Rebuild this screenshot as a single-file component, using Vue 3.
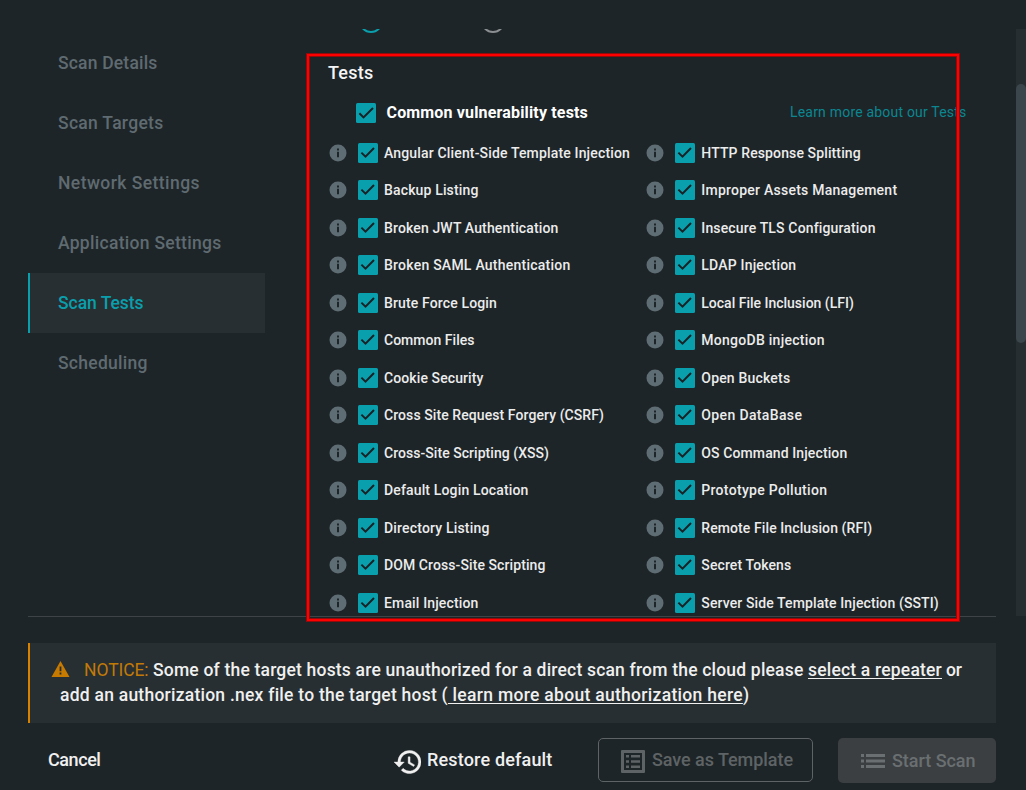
<script setup>
const nav = [
  ['Scan Details', 99.5], ['Scan Targets', 105.5], ['Network Settings', 142],
  ['Application Settings', 163.5], ['Scan Tests', 85.5], ['Scheduling', 89.8]
]
const columns = [
  [
    ['Angular Client-Side Template Injection', 246], ['Backup Listing', 94.5],
    ['Broken JWT Authentication', 174.5], ['Broken SAML Authentication', 186.5],
    ['Brute Force Login', 113], ['Common Files', 90.5], ['Cookie Security', 99.5],
    ['Cross Site Request Forgery (CSRF)', 220], ['Cross-Site Scripting (XSS)', 165],
    ['Default Login Location', 144.5], ['Directory Listing', 105.5],
    ['DOM Cross-Site Scripting', 161.5], ['Email Injection', 94.5]
  ],
  [
    ['HTTP Response Splitting', 159.5], ['Improper Assets Management', 196],
    ['Insecure TLS Configuration', 174], ['LDAP Injection', 95],
    ['Local File Inclusion (LFI)', 152.5], ['MongoDB injection', 123.5],
    ['Open Buckets', 89], ['Open DataBase', 101], ['OS Command Injection', 146],
    ['Prototype Pollution', 126], ['Remote File Inclusion (RFI)', 171],
    ['Secret Tokens', 90], ['Server Side Template Injection (SSTI)', 237.5]
  ]
]
// Tracks a label out or in so that it fills the given width.
const vFit = {
  mounted(el, { value }) {
    const natural = el.getBoundingClientRect().width
    el.style.letterSpacing = (value - natural) / (el.textContent.length) + 'px'
  }
}
</script>

<template>
  <div class="page">
    <div class="body">
      <nav class="side">
        <div v-for="n in nav" :key="n[0]" class="nav" :class="{ active: n[0] === 'Scan Tests' }">
          <span v-fit="n[1]">{{ n[0] }}</span>
        </div>
      </nav>
      <main class="main">
        <div class="radios"><i class="radio on"></i><i class="radio"></i></div>
        <h2><span v-fit="45.5">Tests</span></h2>
        <div class="group">
          <svg class="check" viewBox="0 0 20 20"><rect width="20" height="20" rx="1.5" /><path d="M3.4 10.3l4.1 4.1L17 5" /></svg>
          <b v-fit="201.5">Common vulnerability tests</b>
          <a><span v-fit="176.5">Learn more about our Tests</span></a>
        </div>
        <div class="columns">
          <div v-for="(c, i) in columns" :key="i" class="column">
            <div v-for="t in c" :key="t[0]" class="test">
              <svg class="info" viewBox="0 0 18 18"><circle cx="9" cy="9" r="8.5" /><path d="M8 4.6h2v1.8H8zM8 7.8h2v5.4H8z" /></svg>
              <svg class="check" viewBox="0 0 20 20"><rect width="20" height="20" rx="1.5" /><path d="M3.4 9.6l4.1 4.1L16 5" /></svg>
              <span v-fit="t[1]">{{ t[0] }}</span>
            </div>
          </div>
        </div>
      </main>
      <div class="track"><div class="thumb"></div></div>
    </div>
    <div class="rule"></div>
    <div class="notice">
      <div class="line first">
        <svg class="warn" viewBox="0 0 18 16"><path d="M9 0l9 16H0z" /><path class="mark" d="M8.1 5.6h1.8v4.6H8.1zM8.1 11.6h1.8v1.8H8.1z" /></svg>
        <em v-fit="64.5">NOTICE:</em>
        <span v-fit="650.5" class="s1">Some of the target hosts are unauthorized for a direct scan from the cloud please</span>
        <u v-fit="134">select a repeater</u>
        <span v-fit="16" class="or">or</span>
      </div>
      <div class="line second">
        <span v-fit="387.5">add an authorization .nex file to the target host (</span><u v-fit="295">&nbsp;learn more about authorization here</u><span v-fit="5">)</span>
      </div>
    </div>
    <div class="actions">
      <span v-fit="52.5" class="cancel">Cancel</span>
      <div class="restore">
        <svg class="history" viewBox="1 3 21 18"><path d="M13 3a9 9 0 0 0-9 9H1l4 4 4-4H6a7 7 0 1 1 2.06 4.94l-1.42 1.42A9 9 0 1 0 13 3zm-1 5v5l4.25 2.52.77-1.28-3.52-2.09V8z" /></svg>
        <span v-fit="125.5">Restore default</span>
      </div>
      <button class="save">
        <svg class="tpl" viewBox="0 0 24 23"><path fill-rule="evenodd" d="M1 0h22q1 0 1 1v21q0 1-1 1H1q-1 0-1-1V1q0-1 1-1zM3 3v17h18V3zM5 5h3v2.5H5zM10 5h9v2.5h-9zM5 10.3h3v2.5H5zM10 10.3h9v2.5h-9zM5 15.5h3V18H5zM10 15.5h9V18h-9z" /></svg>
        <span v-fit="141">Save as Template</span>
      </button>
      <button class="start">
        <svg class="list" viewBox="0 0 24 14"><path d="M0 0h3v3H0zM5 0h19v3H5zM0 5.5h3v3H0zM5 5.5h19v3H5zM0 11h3v3H0zM5 11h19v3H5z" /></svg>
        <span v-fit="83.5">Start Scan</span>
      </button>
    </div>
    <div class="highlight"></div>
  </div>
</template>

<style>
body { margin: 0; background: #1e2528; }
</style>

<style scoped>
* { box-sizing: border-box; }
.page { position: relative; width: 1026px; height: 790px; overflow: hidden; background: #1e2528; color: #eee; font-family: Roboto, "Noto Sans", sans-serif; font-weight: 500; white-space: nowrap; display: flex; flex-direction: column; }
.body { height: 587px; margin-top: 29px; display: flex; overflow: hidden; }
.side { width: 237px; margin: 4px 0 0 28px; flex: none; }
.nav { height: 60px; display: flex; align-items: center; padding-left: 28px; border-left: 2px solid transparent; color: #5f6b71; font-size: 17.5px; }
.nav.active { background: #282f32; border-color: #0a9fad; color: #0a9fad; }
.main { flex: 1; padding-left: 63px; }
.radios { height: 4px; overflow: hidden; display: flex; align-items: flex-end; gap: 98px; padding-left: 30.5px; }
.radio { width: 24px; height: 24px; flex: none; border: 2px solid #8b8f91; border-radius: 50%; }
.radio.on { border-color: #0a9fad; }
h2 { margin: 0; height: 60px; line-height: 80px; font-size: 18px; font-weight: 500; color: #f5f5f5; }
.group { display: flex; align-items: center; height: 40px; padding-left: 28px; }
.check { width: 20px; height: 20px; flex: none; }
.check rect { fill: #0a9fad; }
.check path { fill: none; stroke: #1a2225; stroke-width: 2; }
.group b { margin-left: 10.5px; padding-bottom: 1px; font-size: 16px; font-weight: 700; color: #fff; }
.group a { margin-left: 202px; padding-bottom: 2px; font-size: 14px; font-weight: 400; color: #0b8792; }
.columns { display: flex; padding-top: 1px; }
.column { width: 317.3px; flex: none; }
.test { height: 37.5px; display: flex; align-items: center; font-size: 14px; color: #ececec; }
.info { width: 18px; height: 18px; margin: 0 11px 0 1px; flex: none; }
.info circle { fill: #5e6c73; }
.info path { fill: #1e2528; }
.test span { margin-left: 6px; }
.track { width: 10px; height: 587px; background: #272e31; padding-top: 55px; }
.thumb { height: 259px; border-radius: 5px; background: #3b464c; }
.rule { height: 1px; flex: none; margin: 0 30px 0 28px; background: #3d4346; }
.notice { height: 80px; flex: none; margin: 26px 30px 0 28px; border-left: 2px solid #d98200; background: #282f32; padding-top: 15px; font-size: 17.5px; color: #f0f0f0; }
.line { height: 25px; line-height: 25px; display: flex; }
.first { padding-left: 20.5px; align-items: center; }
.second { padding-left: 30px; }
.warn { width: 19px; height: 16px; margin: 0 14.5px 3px 0; flex: none; fill: #c77a00; }
.warn .mark { fill: #282f32; }
em { font-style: normal; font-weight: 400; color: #c27a07; }
.s1 { margin-left: 4.5px; }
.first u { margin-left: 4.5px; }
.or { margin-left: 4px; }
u { text-underline-offset: 2px; text-decoration-thickness: 1px; text-decoration-skip-ink: none; }
.actions { display: flex; align-items: center; height: 45px; margin-top: 15px; font-size: 18px; color: #f0f0f0; }
.cancel { margin-left: 48px; padding-bottom: 2px; }
.restore { display: flex; align-items: center; margin-left: 293.5px; padding-bottom: 2px; }
.history { width: 27px; height: 24px; margin: 4px 6px 0 0; fill: #f0f0f0; stroke: #f0f0f0; stroke-width: .3; }
button { font: inherit; display: flex; align-items: center; border-radius: 5px; padding: 0 0 1px; height: 45px; flex: none; }
.save { width: 215px; height: 44px; align-self: flex-start; margin-left: 45.5px; border: 1px solid #5e6365; background: transparent; color: #5e6365; padding-left: 22px; }
.tpl { width: 24px; height: 23px; margin: 4px 7px 0 0; fill: #5e6365; }
.start { width: 158px; margin-left: 25px; border: 0; background: #3b3f42; color: #6a6f71; padding-left: 23px; }
.list { width: 24px; height: 14px; margin: 2px 7px 0 0; fill: #6a6f71; }
.highlight { position: absolute; left: 306px; top: 53px; width: 654px; height: 569px; border: 1px solid #910a0c; box-shadow: inset 0 0 0 2px #f00, inset 0 0 0 3px #910a0c; }
</style>
